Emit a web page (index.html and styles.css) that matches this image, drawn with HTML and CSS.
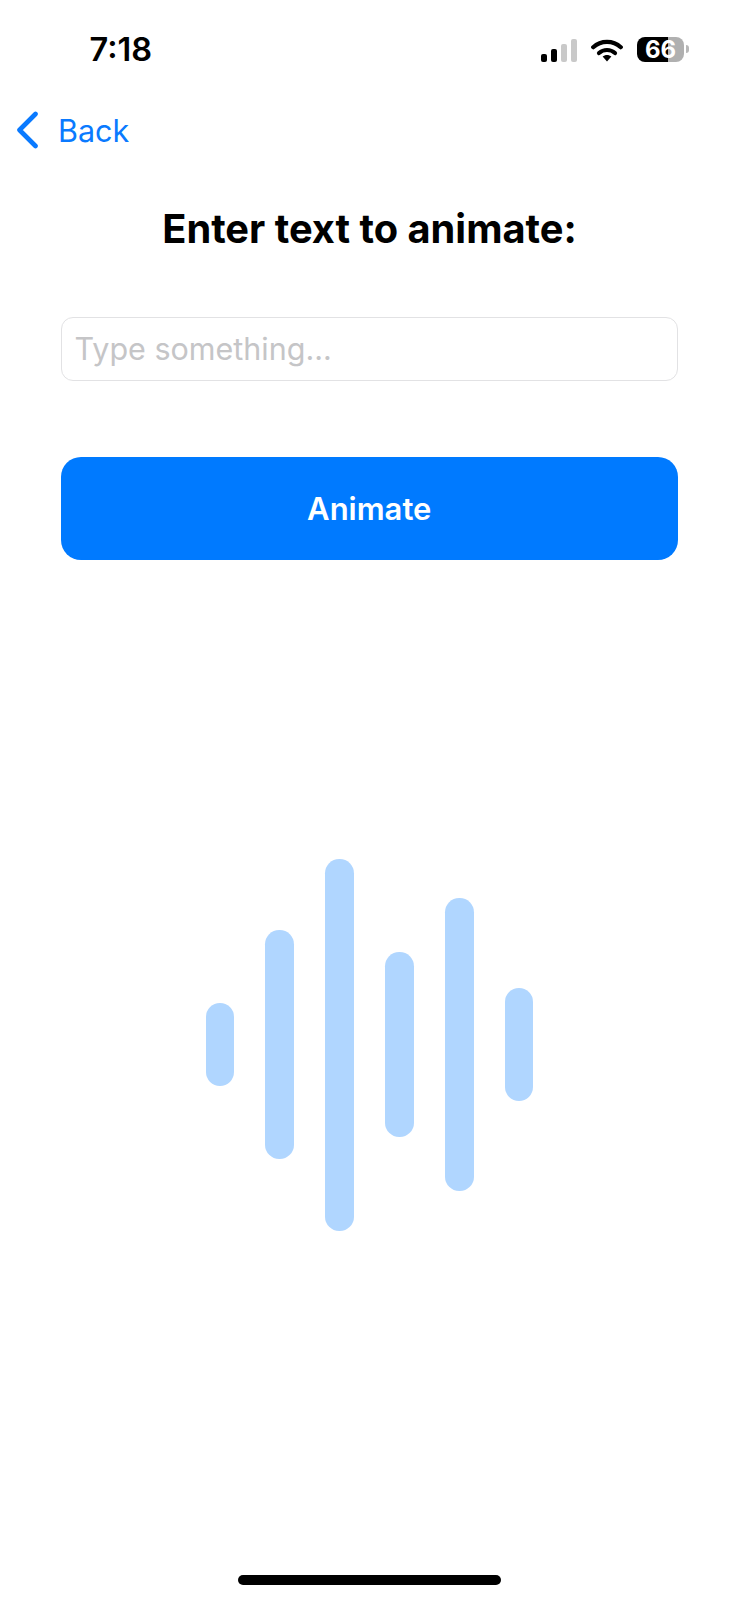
FILE: index.html
```html
<!DOCTYPE html>
<html lang="en">
<head>
<meta charset="utf-8">
<title>Animate</title>
<link rel="stylesheet" href="styles.css">
</head>
<body>
<div class="page">
  <header class="status">
    <span class="time">7:18</span>
    <div class="indicators">
      <div class="signal">
        <i class="sig s1"></i><i class="sig s2"></i><i class="sig s3"></i><i class="sig s4"></i>
      </div>
      <svg class="wifi" width="32" height="24" viewBox="0 0 32 24">
        <path d="M2.2 9.2C10 2 22 2 29.8 9.2" fill="none" stroke="#000" stroke-width="4.2" stroke-linecap="round"/>
        <path d="M8 15C12.6 11 19.4 11 24 15" fill="none" stroke="#000" stroke-width="4.2" stroke-linecap="round"/>
        <path d="M11.6 18.6C14 16.4 18 16.4 20.4 18.6L16 23.6Z" fill="#000"/>
      </svg>
      <div class="battery">
        <div class="cell"><span class="level">66</span></div>
        <div class="nub"></div>
      </div>
    </div>
  </header>
  <nav class="nav">
    <svg class="chevron" width="24" height="38" viewBox="0 0 24 38">
      <path d="M19.5 3L3.5 19L19.5 35" fill="none" stroke="#0a7aff" stroke-width="4.6" stroke-linecap="round" stroke-linejoin="round"/>
    </svg>
    <span class="back">Back</span>
  </nav>
  <h1 class="title">Enter text to animate:</h1>
  <input class="field" type="text" placeholder="Type something...">
  <button class="action" type="button">Animate</button>
  <div class="wave">
    <i class="bar b1"></i><i class="bar b2"></i><i class="bar b3"></i><i class="bar b4"></i><i class="bar b5"></i><i class="bar b6"></i>
  </div>
  <div class="home"></div>
</div>
</body>
</html>
```
FILE: styles.css
```css
* { box-sizing: border-box; }
html, body { margin: 0; padding: 0; background: #fff; }
body { font-family: Inter, "Liberation Sans", sans-serif; color: #000; }
.page { width: 739px; height: 1600px; display: flex; flex-direction: column; overflow: hidden; }

.status { height: 64px; padding: 34px 50px 0 89.5px; display: flex; justify-content: space-between; align-items: center; flex: none; }
.time { font-size: 32.5px; font-weight: 600; line-height: 36px; padding-top: 1px; }
.indicators { display: flex; align-items: flex-end; height: 25px; }
.signal { display: flex; align-items: flex-end; gap: 3.5px; height: 23px; margin-right: 14px; }
.sig { display: block; width: 6.5px; border-radius: 2px; background: #c9c9c9; }
.s1 { height: 8px; background: #000; }
.s2 { height: 13px; background: #000; }
.s3 { height: 18px; }
.s4 { height: 23px; }
.wifi { display: block; margin-right: 14px; }
.battery { display: flex; align-items: center; height: 25px; gap: 2px; }
.cell { width: 47px; height: 25px; border-radius: 8px; background: linear-gradient(90deg, #000 0 66%, #b0b0b0 66% 100%); display: flex; align-items: center; justify-content: center; }
.level { color: #fff; font-size: 24px; font-weight: 700; line-height: 25px; }
.nub { width: 3px; height: 8px; border-radius: 0 3px 3px 0; background: #b8b8b8; }

.nav { height: 38px; margin-top: 47px; padding-left: 16px; display: flex; align-items: center; gap: 18px; flex: none; }
.chevron { display: block; }
.back { font-size: 30.5px; line-height: 40px; color: #0a7aff; padding-top: 1px; }

.title { margin: 56px 0 0; font-size: 39.8px; line-height: 48px; font-weight: 700; text-align: center; flex: none; }

.field { display: block; flex: none; width: 617.5px; height: 64.5px; margin: 63.5px 0 0 60.5px; padding: 0 13px; border: 1.5px solid #e2e2e4; border-radius: 12px; background: #fff; font-family: inherit; font-size: 30.5px; outline: none; }
.field::placeholder { color: #c5c5c7; opacity: 1; }

.action { display: block; flex: none; width: 617.5px; height: 103px; margin: 75.5px 0 0 60.5px; border: 0; border-radius: 20px; background: #007aff; color: #fff; font-family: inherit; font-size: 31px; font-weight: 600; }

.wave { flex: none; height: 372px; margin-top: 299px; display: flex; align-items: center; justify-content: center; gap: 31.4px; }
.bar { display: block; width: 28.5px; border-radius: 14.25px; background: #b0d6ff; }
.b1 { height: 83px; }
.b2 { height: 229px; }
.b3 { height: 372px; }
.b4 { height: 185px; }
.b5 { height: 293px; }
.b6 { height: 113px; }

.home { flex: none; width: 263px; height: 10px; margin: 344.5px 0 0 238px; border-radius: 5px; background: #000; }
```
